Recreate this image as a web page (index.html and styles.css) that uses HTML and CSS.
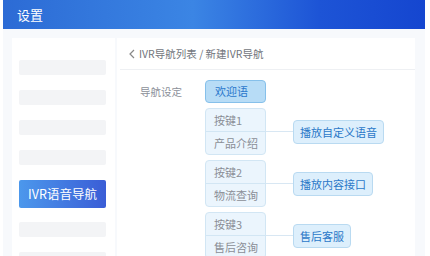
FILE: index.html
```html
<!DOCTYPE html>
<html>
<head>
	<meta charset="utf-8">
	<title>设置</title>
	<link rel="stylesheet" href="styles.css">
</head>
<body>
	<div class="app">
		<div class="header">设置</div>
		<div class="content">
			<div class="sidebar">
				<div class="side-item"></div>
				<div class="side-item"></div>
				<div class="side-item"></div>
				<div class="side-item"></div>
				<div class="side-item active">IVR语音导航</div>
				<div class="side-item"></div>
				<div class="side-item"></div>
			</div>
			<div class="main">
				<div class="crumb">
					<svg class="back" width="6" height="10" viewBox="0 0 6 10"><polyline points="5,1 1,5 5,9" fill="none" stroke="#888" stroke-width="1.2"/></svg>
					<span>IVR导航列表 / 新建IVR导航</span>
				</div>
				<div class="form">
					<div class="label">导航设定</div>
					<div class="tree">
						<div class="welcome">欢迎语</div>
						<div class="branch">
							<div class="key">
								<div class="key-row">按键1</div>
								<div class="key-row">产品介绍</div>
							</div>
							<div class="link"></div>
							<div class="action">播放自定义语音</div>
						</div>
						<div class="branch">
							<div class="key">
								<div class="key-row">按键2</div>
								<div class="key-row">物流查询</div>
							</div>
							<div class="link"></div>
							<div class="action">播放内容接口</div>
						</div>
						<div class="branch">
							<div class="key">
								<div class="key-row">按键3</div>
								<div class="key-row">售后咨询</div>
							</div>
							<div class="link"></div>
							<div class="action">售后客服</div>
						</div>
					</div>
				</div>
			</div>
		</div>
	</div>
</body>
</html>
```

FILE: styles.css
```css
body {
	margin: 0;
	background-color: #ffffff;
	font-family: "Noto Sans CJK SC", "Noto Sans", sans-serif;
	overflow: hidden;
}

.app {
	width: 422px;
	margin-left: 3px;
}

.header {
	height: 29px;
	line-height: 29px;
	padding-left: 14px;
	color: #ffffff;
	font-size: 13px;
	background: linear-gradient(90deg, #2c6bd5 0%, #3b85e4 45%, #1d54d6 75%, #1546d0 100%);
}

.content {
	display: flex;
	gap: 2px;
	height: 227px;
	padding: 9px 10px 0 9px;
	background-color: #f7f9fc;
}

.sidebar {
	width: 103px;
	padding: 22px 0 0 7px;
	box-sizing: border-box;
	background-color: #ffffff;
}

.side-item {
	width: 87px;
	height: 15px;
	margin-bottom: 15px;
	border-radius: 2px;
	background-color: #f3f4f6;
}

.side-item.active {
	height: 28px;
	margin-bottom: 14px;
	line-height: 28px;
	text-align: center;
	color: #ffffff;
	font-size: 12.5px;
	background: linear-gradient(90deg, #4c98ec, #3a5dd6);
}

.main {
	flex: 1;
	background-color: #ffffff;
}

.crumb {
	display: flex;
	align-items: center;
	gap: 4px;
	height: 31px;
	margin-left: 3px;
	padding-left: 9px;
	border-bottom: 1px solid #eef0f3;
	color: #72767d;
	font-size: 10.5px;
}

.form {
	display: flex;
	padding-top: 10px;
}

.label {
	width: 88px;
	padding-left: 23px;
	box-sizing: border-box;
	line-height: 24px;
	color: #8c9099;
	font-size: 10.5px;
}

.tree {
	display: flex;
	flex-direction: column;
	gap: 5px;
}

.welcome {
	width: 61px;
	height: 23px;
	box-sizing: border-box;
	line-height: 21px;
	padding-left: 9px;
	border: 1px solid #86c0ea;
	border-radius: 4px;
	background-color: #b7dcf6;
	color: #2b78cc;
	font-size: 11px;
}

.branch {
	display: flex;
	align-items: center;
}

.key {
	width: 61px;
	box-sizing: border-box;
	border: 1px solid #d2e6f4;
	border-radius: 4px;
	background-color: #ebf5fd;
}

.key-row {
	height: 22px;
	line-height: 22px;
	padding-left: 8px;
	color: #8a8e96;
	font-size: 11px;
}

.key-row + .key-row {
	border-top: 1px solid #d2e6f4;
}

.link {
	width: 27px;
	height: 1px;
	background-color: #d8e7f3;
}

.action {
	height: 24px;
	line-height: 22px;
	box-sizing: border-box;
	padding: 0 6px;
	border: 1px solid #b9daf1;
	border-radius: 4px;
	background-color: #ddeffc;
	color: #2b78c8;
	font-size: 11px;
}
```
